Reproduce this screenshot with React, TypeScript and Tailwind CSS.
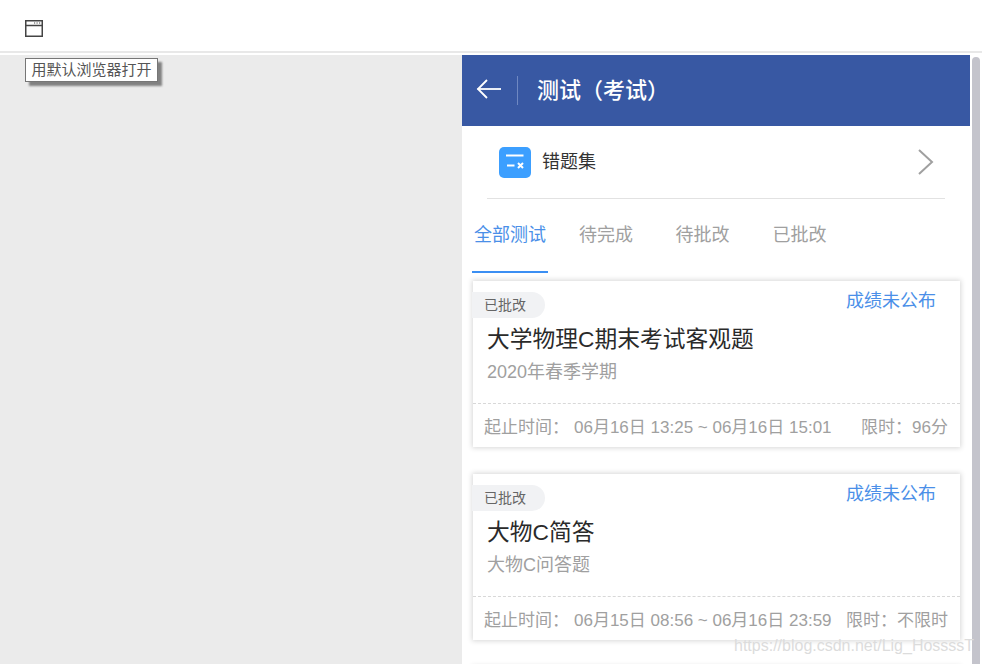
const font = "font-['Liberation_Sans','Noto_Sans_CJK_SC',sans-serif]";

const tabs = [
  { label: "全部测试", width: "w-[76px]", active: true },
  { label: "待完成", width: "ml-[10px] w-[96px]" },
  { label: "待批改", width: "w-[97px]" },
  { label: "已批改", width: "w-[97px]" },
];

const exams = [
  {
    title: "大学物理C期末考试客观题",
    sub: "2020年春季学期",
    time: "06月16日 13:25 ~ 06月16日 15:01",
    limit: "限时：96分",
  },
  {
    title: "大物C简答",
    sub: "大物C问答题",
    time: "06月15日 08:56 ~ 06月16日 23:59",
    limit: "限时：不限时",
  },
];

const WindowIcon = () => (
  <svg width="18" height="17" viewBox="0 0 18 17" fill="none" className="text-[#444]">
    <rect x="0.75" y="0.75" width="16.5" height="15.5" stroke="currentColor" strokeWidth="1.5" />
    <path d="M1 5.5h16" stroke="currentColor" strokeWidth="1.5" />
    <path d="M9 3h1.2M11.5 3h1.2M14 3h1.2" stroke="currentColor" strokeWidth="1" />
  </svg>
);

const BackIcon = () => (
  <svg width="26" height="20" viewBox="0 0 26 20" fill="none" stroke="white" strokeWidth="1.8">
    <path d="M1.5 10H25" />
    <path d="M11 1L2 10l9 9" />
  </svg>
);

const ChevronIcon = () => (
  <svg width="16" height="26" viewBox="0 0 16 26" fill="none" stroke="#a0a0a0" strokeWidth="2">
    <path d="M1 1l13 12L1 25" />
  </svg>
);

const WrongBookIcon = () => (
  <div className="flex h-[31px] w-[32px] items-center justify-center rounded-[5px] bg-[#3c9fff]">
    <svg width="22" height="18" viewBox="0 0 22 18" fill="none" stroke="white">
      <path d="M2 2.5h17.5" strokeWidth="2" />
      <path d="M3 12.5h7.5" strokeWidth="2" />
      <path d="M14 10l5 5M19 10l-5 5" strokeWidth="2" />
    </svg>
  </div>
);

const ExamCard = ({ exam }: { exam: (typeof exams)[number] }) => (
  <div className="relative h-[166px] w-[487px] bg-white shadow-[0_0_5px_1px_rgba(0,0,0,0.16)]">
    <div className="absolute left-[-1px] top-[11px] flex h-[26px] w-[73px] items-center rounded-r-[13px] bg-[#f1f2f4] pl-[12px] text-[14px] text-[#666]">
      已批改
    </div>
    <div className="absolute right-[24px] top-[7px] text-[18px] leading-[26px] text-[#4a8fe8]">成绩未公布</div>
    <div className="h-[122px] pl-[14px] pt-[42px]">
      <div className="text-[22.75px] leading-[32px] text-[#2a2a2a]">{exam.title}</div>
      <div className="mt-[4px] text-[18px] leading-[26px] text-[#a0a0a0]">{exam.sub}</div>
    </div>
    <div className="flex h-[44px] items-center justify-between border-t border-dashed border-[#d8d8d8] pl-[11px] pr-[12px] pt-[4px] text-[17px] text-[#a0a0a0]">
      <span className="flex">
        <span className="w-[90px]">起止时间：</span>
        <span>{exam.time}</span>
      </span>
      <span>{exam.limit}</span>
    </div>
  </div>
);

export default function App() {
  return (
    <div className={`relative flex h-[664px] w-[982px] flex-col overflow-hidden bg-white ${font}`}>
      <div className="flex h-[53px] shrink-0 items-center border-b-2 border-[#e8e8e8] pl-[25px] pt-[5px]">
        <WindowIcon />
      </div>

      <div className="absolute left-[25px] top-[58px] z-10 flex h-[24px] w-[133px] items-center justify-center border border-[#767676] bg-white text-[15px] text-[#555] shadow-[4px_4px_2px_rgba(0,0,0,0.45)]">
        用默认浏览器打开
      </div>

      <div className="flex min-h-0 flex-1 pt-[2px]">
        <div className="w-[462px] shrink-0 bg-[#ebebeb]" />

        <div className="flex flex-1 flex-col">
          <div className="flex h-[71px] w-[508px] shrink-0 items-center bg-[#3858a3] text-white">
            <div className="ml-[14px] mb-[3px] flex">
              <BackIcon />
            </div>
            <div className="ml-[15px] h-[29px] w-px bg-[#6f88c2]" />
            <div className="ml-[19px] text-[22px] font-medium">测试（考试）</div>
          </div>

          <div className="flex min-h-0 flex-1">
            <div className="w-[508px] shrink-0">
              <div className="mx-[25px] flex h-[73px] w-[458px] items-center border-b border-[#e2e2e2] pl-[12px]">
                <WrongBookIcon />
                <span className="ml-[11px] text-[18px] text-[#333]">错题集</span>
                <div className="ml-auto mr-[11px] mb-[1px] flex">
                  <ChevronIcon />
                </div>
              </div>

              <div className="ml-[10px] flex h-[74px]">
                {tabs.map((tab) => (
                  <div
                    key={tab.label}
                    className={`${tab.width} flex h-full flex-col items-center pt-[22px] text-[18px] leading-[28px] ${
                      tab.active ? "border-b-2 border-[#3b8ff3] text-[#4a8fe8]" : "text-[#a0a0a0]"
                    }`}
                  >
                    {tab.label}
                  </div>
                ))}
              </div>

              <div className="flex flex-col gap-[27px] pl-[11px] pt-[8px]">
                {exams.map((exam) => (
                  <ExamCard key={exam.title} exam={exam} />
                ))}
                <div className="h-[20px] w-[487px] bg-white shadow-[0_0_5px_1px_rgba(0,0,0,0.16)]" />
              </div>
            </div>

            <div className="ml-[2px] mt-[-69px] h-[650px] w-[8px] rounded-[4px] bg-[#c4c4cc]" />
          </div>
        </div>
      </div>

      <div className="absolute left-[734px] top-[634px] text-[16px] leading-[24px] text-[#dcdcdc]">
        https://blog.csdn.net/Lig_HossssT
      </div>
    </div>
  );
}
